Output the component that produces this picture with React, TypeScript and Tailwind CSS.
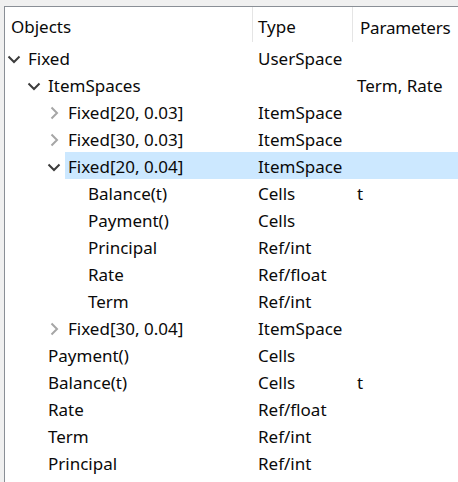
import React from 'react';

type Row = {
  name: string;
  type: string;
  params?: string;
  level: number;
  toggle?: 'open' | 'closed';
  selected?: boolean;
};

const rows: Row[] = [
  { name: 'Fixed', type: 'UserSpace', level: 0, toggle: 'open' },
  { name: 'ItemSpaces', type: '', params: 'Term, Rate', level: 1, toggle: 'open' },
  { name: 'Fixed[20, 0.03]', type: 'ItemSpace', level: 2, toggle: 'closed' },
  { name: 'Fixed[30, 0.03]', type: 'ItemSpace', level: 2, toggle: 'closed' },
  { name: 'Fixed[20, 0.04]', type: 'ItemSpace', level: 2, toggle: 'open', selected: true },
  { name: 'Balance(t)', type: 'Cells', params: 't', level: 3 },
  { name: 'Payment()', type: 'Cells', level: 3 },
  { name: 'Principal', type: 'Ref/int', level: 3 },
  { name: 'Rate', type: 'Ref/float', level: 3 },
  { name: 'Term', type: 'Ref/int', level: 3 },
  { name: 'Fixed[30, 0.04]', type: 'ItemSpace', level: 2, toggle: 'closed' },
  { name: 'Payment()', type: 'Cells', level: 1 },
  { name: 'Balance(t)', type: 'Cells', params: 't', level: 1 },
  { name: 'Rate', type: 'Ref/float', level: 1 },
  { name: 'Term', type: 'Ref/int', level: 1 },
  { name: 'Principal', type: 'Ref/int', level: 1 },
];

const indent = ['pl-[23px]', 'pl-[43px]', 'pl-[63px]', 'pl-[83px]'];

function Chevron({ open }: { open: boolean }) {
  return (
    <svg
      width="14"
      height="14"
      viewBox="0 0 14 14"
      className={`absolute left-[-21px] top-1/2 -translate-y-1/2 ${open ? 'text-[#3c3c3c]' : 'text-[#a6a6a6]'}`}
    >
      {open ? (
        <path d="M1.5 4.5 L7 10 L12.5 4.5" fill="none" stroke="currentColor" strokeWidth="2" />
      ) : (
        <path d="M4.5 1.5 L10 7 L4.5 12.5" fill="none" stroke="currentColor" strokeWidth="2" />
      )}
    </svg>
  );
}

export default function App() {
  return (
    <div
      className="w-[458px] h-[482px] bg-[#f0f0f0] pt-[6px] pl-[4px] overflow-hidden text-[17px] leading-none text-[#0a0a0a]"
      style={{ fontFamily: '"Noto Sans", "Open Sans", sans-serif' }}
    >
      <div className="h-full bg-white border-l border-t border-[#8a8f96]">
        <div className="grid grid-cols-[248px_100px_1fr] h-[37px]">
          <div className="pl-[6px] pt-[3px] flex items-center border-r border-[#e5e5e5] mb-[2px]">Objects</div>
          <div className="pl-[5px] pt-[3px] flex items-center border-r border-[#e5e5e5] mb-[2px]">Type</div>
          <div className="pl-[7px] pt-[3px] flex items-center tracking-[-0.2px]">Parameters</div>
        </div>
        <div className="flex flex-col">
          {rows.map((r, i) => (
            <div key={i} className="grid grid-cols-[248px_100px_1fr] h-[27px] relative">
              {r.selected && (
                <div className="absolute inset-y-0 left-[60px] right-0 bg-[#cce8ff]" />
              )}
              <div className={`relative flex items-center pt-[2px] ${indent[r.level]}`}>
                <span className="relative">
                  {r.toggle && <Chevron open={r.toggle === 'open'} />}
                  {r.name}
                </span>
              </div>
              <div className="relative pl-[5px] pt-[2px] flex items-center">{r.type}</div>
              <div className="relative pl-[4px] pt-[2px] flex items-center">{r.params}</div>
            </div>
          ))}
        </div>
      </div>
    </div>
  );
}
